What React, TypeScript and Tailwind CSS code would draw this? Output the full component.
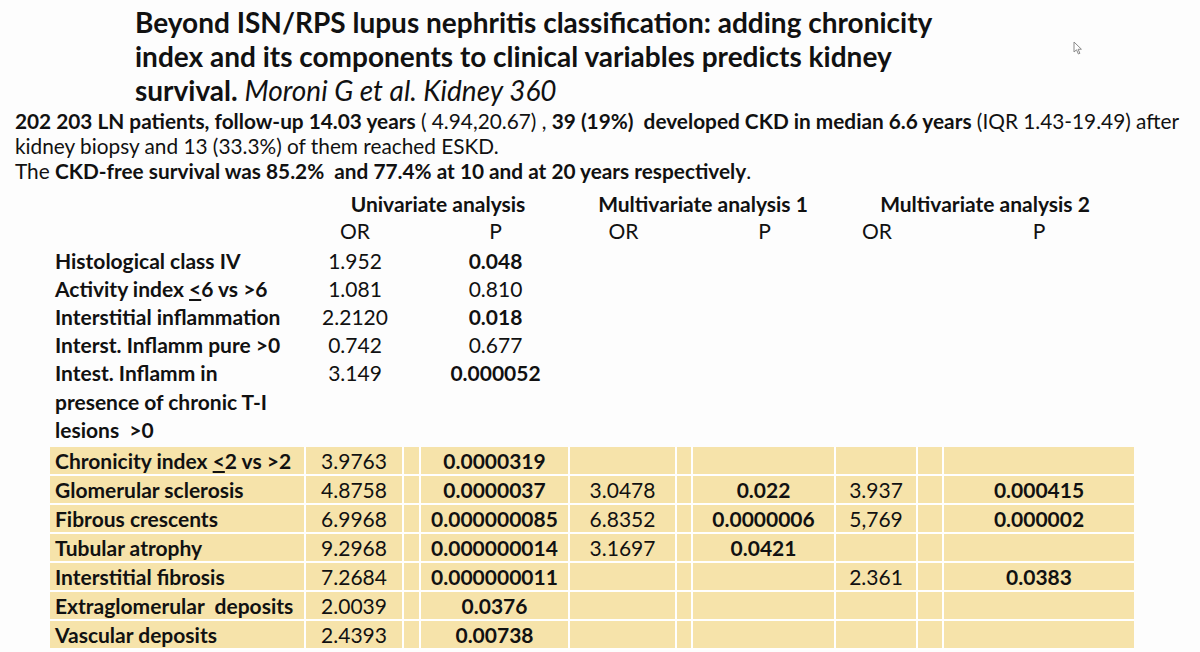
import React from 'react';

const cols = 'grid grid-cols-[256px_98px_17px_149px_107px_16px_143px_82px_26px_190px]';

const upperRows = [
  { label: 'Histological class IV', or: '1.952', p: '0.048', bold: true },
  { label: <>Activity index <u>&lt;</u>6 vs &gt;6</>, or: '1.081', p: '0.810', bold: false },
  { label: 'Interstitial inflammation', or: '2.2120', p: '0.018', bold: true },
  { label: 'Interst. Inflamm pure >0', or: '0.742', p: '0.677', bold: false },
];

const yellowRows = [
  { label: <>Chronicity index <u>&lt;</u>2 vs &gt;2</>, or: '3.9763', p: '0.0000319', or1: '', p1: '', or2: '', p2: '' },
  { label: 'Glomerular sclerosis', or: '4.8758', p: '0.0000037', or1: '3.0478', p1: '0.022', or2: '3.937', p2: '0.000415' },
  { label: 'Fibrous crescents', or: '6.9968', p: '0.000000085', or1: '6.8352', p1: '0.0000006', or2: '5,769', p2: '0.000002' },
  { label: 'Tubular atrophy', or: '9.2968', p: '0.000000014', or1: '3.1697', p1: '0.0421', or2: '', p2: '' },
  { label: 'Interstitial fibrosis', or: '7.2684', p: '0.000000011', or1: '', p1: '', or2: '2.361', p2: '0.0383' },
  { label: 'Extraglomerular\u00a0\u00a0deposits', or: '2.0039', p: '0.0376', or1: '', p1: '', or2: '', p2: '' },
  { label: 'Vascular deposits', or: '2.4393', p: '0.00738', or1: '', p1: '', or2: '', p2: '' },
];

function Cell({ children, last, bold }: { children?: React.ReactNode; last?: boolean; bold?: boolean }) {
  return (
    <div
      className={`flex items-center justify-center border-b-2 border-white ${last ? '' : 'border-r-2'} ${
        bold ? 'font-bold' : ''
      }`}
    >
      {children}
    </div>
  );
}

function Cursor() {
  return (
    <svg width="10" height="14" viewBox="0 0 10 14" className="absolute left-[1073px] top-[41px]">
      <path d="M1 1 L1 11 L3.5 8.8 L5.4 13 L6.9 12.3 L5.1 8.3 L8.4 8.2 Z" fill="#fff" stroke="#8a8a8a" strokeWidth="1" strokeLinejoin="round" />
    </svg>
  );
}

export default function App() {
  return (
    <div className="relative h-[652px] w-[1200px] overflow-hidden bg-[#fdfdfd] font-['Lato',sans-serif] text-[#111]">
      <Cursor />

      {/* Title */}
      <div className="pl-[135px] pt-[5px] text-[28px] font-bold leading-[34px]">
        <div>Beyond ISN/RPS lupus nephritis classification: adding chronicity</div>
        <div>index and its components to clinical variables predicts kidney</div>
        <div>
          survival. <span className="font-normal italic">Moroni G et al. Kidney 360</span>
        </div>
      </div>

      {/* Summary */}
      <div className="pl-[15px] pt-[1px] text-[20.8px] leading-[25px]">
        <div>
          <b>202 203 LN patients, follow-up 14.03 years</b> ( 4.94,20.67) , <b>39 (19%)&nbsp; developed CKD in median 6.6 years</b>{' '}
          (IQR 1.43-19.49) after
        </div>
        <div>kidney biopsy and 13 (33.3%) of them reached ESKD.</div>
        <div>
          The <b>CKD-free survival was 85.2%&nbsp; and 77.4% at 10 and at 20 years respectively</b>.
        </div>
      </div>

      {/* Table */}
      <div className="ml-[50px] mt-[10px] text-[21px]">
        <div className={`${cols} h-[22px] leading-[22px] font-bold`}>
          <div />
          <div className="col-span-3 text-center">Univariate analysis</div>
          <div className="col-span-3 text-center">Multivariate analysis 1</div>
          <div className="col-span-3 text-center">Multivariate analysis 2</div>
        </div>
        <div className={`${cols} h-[32px] leading-[32px] text-center`}>
          <div />
          <div>OR</div>
          <div />
          <div>P</div>
          <div>OR</div>
          <div />
          <div>P</div>
          <div>OR</div>
          <div />
          <div>P</div>
        </div>

        {upperRows.map((r, i) => (
          <div key={i} className={`${cols} h-[28px] leading-[28px]`}>
            <div className="pl-[5px] font-bold">{r.label}</div>
            <div className="text-center">{r.or}</div>
            <div />
            <div className={`text-center ${r.bold ? 'font-bold' : ''}`}>{r.p}</div>
          </div>
        ))}
        <div className={`${cols} leading-[28.5px]`}>
          <div className="pl-[5px] font-bold">
            Intest. Inflamm in
            <br />
            presence of chronic T-I
            <br />
            lesions&nbsp; &gt;0
          </div>
          <div className="text-center">3.149</div>
          <div />
          <div className="text-center font-bold">0.000052</div>
        </div>

        <div className="mt-[2px] w-[1084px] bg-[#f6e3aa]">
          {yellowRows.map((r, i) => (
            <div key={i} className={`${cols} h-[29px] leading-[27px]`}>
              <Cell>
                <span className="w-full pl-[5px] font-bold">{r.label}</span>
              </Cell>
              <Cell>{r.or}</Cell>
              <Cell />
              <Cell bold>{r.p}</Cell>
              <Cell>{r.or1}</Cell>
              <Cell />
              <Cell bold>{r.p1}</Cell>
              <Cell>{r.or2}</Cell>
              <Cell />
              <Cell bold last>
                {r.p2}
              </Cell>
            </div>
          ))}
        </div>
      </div>
    </div>
  );
}
